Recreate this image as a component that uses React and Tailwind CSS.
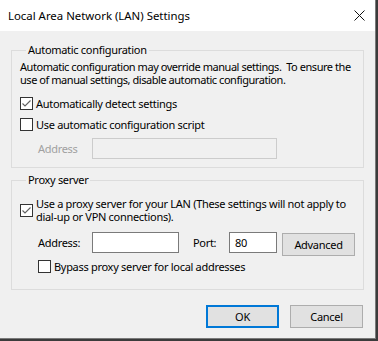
import React from "react";

const Check = ({ checked }) => (
  <span className="w-[13px] h-[13px] border border-[#333333] bg-white flex items-center justify-center shrink-0">
    {checked && (
      <svg width="11" height="11" viewBox="0 0 11 11">
        <path d="M1.5 5.5 L4 8 L9.5 2.5" fill="none" stroke="#606060" strokeWidth="1.1" />
      </svg>
    )}
  </span>
);

const Button = ({ children, primary, className }) => (
  <button
    className={
      "w-[73px] h-[23px] bg-[#e1e1e1] flex items-center justify-center text-black " +
      (primary ? "border-2 border-[#0078d7] " : "border border-[#adadad] ") +
      (className || "")
    }
  >
    {children}
  </button>
);

const App = () => {
  return (
    <div className="w-[378px] h-[341px] bg-[#3b3b3b] font-['Noto_Sans',sans-serif] text-[11px] tracking-[-0.3px] leading-[13px] text-black">
      <div className="w-[376px] h-[339px] bg-[#f0f0f0] border-r border-b border-[#7a7a7a] flex flex-col">
        {/* Title bar */}
        <div className="h-[31px] bg-white flex items-center justify-between pl-[8px] pr-[10px] shrink-0">
          <span className="text-[11.4px] tracking-normal">Local Area Network (LAN) Settings</span>
          <svg width="11" height="11" viewBox="0 0 11 11">
            <path d="M0.5 0.5 L10.5 10.5 M10.5 0.5 L0.5 10.5" stroke="#111" strokeWidth="1" />
          </svg>
        </div>

        <div className="px-[11px] flex flex-col">
          {/* Automatic configuration */}
          <fieldset className="mt-[12px] h-[125px] border border-[#dcdcdc] pl-[8px] pr-[8px]">
            <legend className="ml-[6px] px-[2px] leading-[14px]">Automatic configuration</legend>
            <p className="mt-[3px] mr-[-8px] leading-[13px] tracking-[-0.45px]">
              Automatic configuration may override manual settings.&nbsp; To ensure the use of manual settings, disable automatic configuration.
            </p>
            <label className="flex items-center gap-[3px] mt-[10px] h-[14px]">
              <Check checked />
              <span>Automatically detect settings</span>
            </label>
            <label className="flex items-center gap-[3px] mt-[7px] h-[14px]">
              <Check />
              <span>Use automatic configuration script</span>
            </label>
            <div className="flex items-center mt-[7px] h-[21px]">
              <span className="w-[54px] ml-[18px] shrink-0 text-[#a0a0a0]">Address</span>
              <div className="w-[185px] h-[21px] border border-[#cccccc] bg-[#f0f0f0]" />
            </div>
          </fieldset>

          {/* Proxy server */}
          <fieldset className="mt-[5px] h-[117px] border border-[#dcdcdc] pl-[8px] pr-[8px]">
            <legend className="ml-[6px] px-[2px] leading-[14px]">Proxy server</legend>
            <label className="flex items-center gap-[3px] mt-[10px]">
              <Check checked />
              <span className="leading-[13px]">
                Use a proxy server for your LAN (These settings will not apply to dial-up or VPN connections).
              </span>
            </label>
            <div className="flex items-center mt-[9px] h-[21px]">
              <span className="w-[54px] ml-[18px] shrink-0">Address:</span>
              <div className="w-[87px] h-[21px] border border-[#7a7a7a] bg-white shrink-0" />
              <span className="ml-[14px] w-[36px] shrink-0">Port:</span>
              <div className="w-[48px] h-[21px] border border-[#7a7a7a] bg-white flex items-center pl-[5px] shrink-0">80</div>
              <Button className="ml-[5px] mt-[3px] shrink-0">Advanced</Button>
            </div>
            <label className="flex items-center gap-[3px] mt-[6px] pl-[18px] h-[14px]">
              <Check />
              <span>Bypass proxy server for local addresses</span>
            </label>
          </fieldset>

          {/* Buttons */}
          <div className="flex justify-end gap-[11px] mt-[15px] pr-[1px]">
            <Button primary>OK</Button>
            <Button>Cancel</Button>
          </div>
        </div>
      </div>
    </div>
  );
};

export default App;
